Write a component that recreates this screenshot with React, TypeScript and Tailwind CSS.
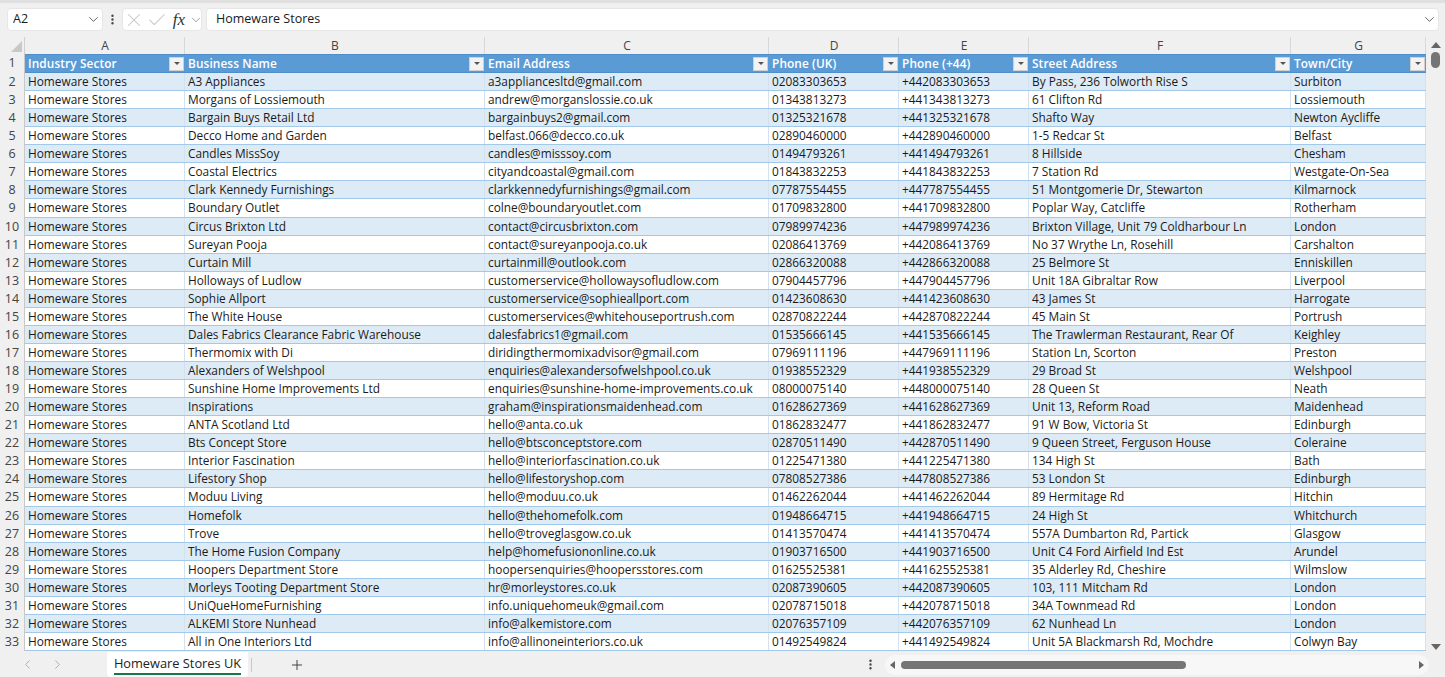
import { ChevronDown, ChevronLeft, ChevronRight, Check, X, Plus, EllipsisVertical } from 'lucide-react'

const cols = [
  { id: 'A', w: 'w-[160px]', name: 'Industry Sector' },
  { id: 'B', w: 'w-[300px]', name: 'Business Name' },
  { id: 'C', w: 'w-[284px]', name: 'Email Address' },
  { id: 'D', w: 'w-[130px]', name: 'Phone (UK)' },
  { id: 'E', w: 'w-[130px]', name: 'Phone (+44)' },
  { id: 'F', w: 'w-[262px]', name: 'Street Address' },
  { id: 'G', w: 'w-[135px]', name: 'Town/City' },
]

const rows = [
  ['A3 Appliances', 'a3appliancesltd@gmail.com', '02083303653', 'By Pass, 236 Tolworth Rise S', 'Surbiton'],
  ['Morgans of Lossiemouth', 'andrew@morganslossie.co.uk', '01343813273', '61 Clifton Rd', 'Lossiemouth'],
  ['Bargain Buys Retail Ltd', 'bargainbuys2@gmail.com', '01325321678', 'Shafto Way', 'Newton Aycliffe'],
  ['Decco Home and Garden', 'belfast.066@decco.co.uk', '02890460000', '1-5 Redcar St', 'Belfast'],
  ['Candles MissSoy', 'candles@misssoy.com', '01494793261', '8 Hillside', 'Chesham'],
  ['Coastal Electrics', 'cityandcoastal@gmail.com', '01843832253', '7 Station Rd', 'Westgate-On-Sea'],
  ['Clark Kennedy Furnishings', 'clarkkennedyfurnishings@gmail.com', '07787554455', '51 Montgomerie Dr, Stewarton', 'Kilmarnock'],
  ['Boundary Outlet', 'colne@boundaryoutlet.com', '01709832800', 'Poplar Way, Catcliffe', 'Rotherham'],
  ['Circus Brixton Ltd', 'contact@circusbrixton.com', '07989974236', 'Brixton Village, Unit 79 Coldharbour Ln', 'London'],
  ['Sureyan Pooja', 'contact@sureyanpooja.co.uk', '02086413769', 'No 37 Wrythe Ln, Rosehill', 'Carshalton'],
  ['Curtain Mill', 'curtainmill@outlook.com', '02866320088', '25 Belmore St', 'Enniskillen'],
  ['Holloways of Ludlow', 'customerservice@hollowaysofludlow.com', '07904457796', 'Unit 18A Gibraltar Row', 'Liverpool'],
  ['Sophie Allport', 'customerservice@sophieallport.com', '01423608630', '43 James St', 'Harrogate'],
  ['The White House', 'customerservices@whitehouseportrush.com', '02870822244', '45 Main St', 'Portrush'],
  ['Dales Fabrics Clearance Fabric Warehouse', 'dalesfabrics1@gmail.com', '01535666145', 'The Trawlerman Restaurant, Rear Of', 'Keighley'],
  ['Thermomix with Di', 'diridingthermomixadvisor@gmail.com', '07969111196', 'Station Ln, Scorton', 'Preston'],
  ['Alexanders of Welshpool', 'enquiries@alexandersofwelshpool.co.uk', '01938552329', '29 Broad St', 'Welshpool'],
  ['Sunshine Home Improvements Ltd', 'enquiries@sunshine-home-improvements.co.uk', '08000075140', '28 Queen St', 'Neath'],
  ['Inspirations', 'graham@inspirationsmaidenhead.com', '01628627369', 'Unit 13, Reform Road', 'Maidenhead'],
  ['ANTA Scotland Ltd', 'hello@anta.co.uk', '01862832477', '91 W Bow, Victoria St', 'Edinburgh'],
  ['Bts Concept Store', 'hello@btsconceptstore.com', '02870511490', '9 Queen Street, Ferguson House', 'Coleraine'],
  ['Interior Fascination', 'hello@interiorfascination.co.uk', '01225471380', '134 High St', 'Bath'],
  ['Lifestory Shop', 'hello@lifestoryshop.com', '07808527386', '53 London St', 'Edinburgh'],
  ['Moduu Living', 'hello@moduu.co.uk', '01462262044', '89 Hermitage Rd', 'Hitchin'],
  ['Homefolk', 'hello@thehomefolk.com', '01948664715', '24 High St', 'Whitchurch'],
  ['Trove', 'hello@troveglasgow.co.uk', '01413570474', '557A Dumbarton Rd, Partick', 'Glasgow'],
  ['The Home Fusion Company', 'help@homefusiononline.co.uk', '01903716500', 'Unit C4 Ford Airfield Ind Est', 'Arundel'],
  ['Hoopers Department Store', 'hoopersenquiries@hoopersstores.com', '01625525381', '35 Alderley Rd, Cheshire', 'Wilmslow'],
  ['Morleys Tooting Department Store', 'hr@morleystores.co.uk', '02087390605', '103, 111 Mitcham Rd', 'London'],
  ['UniQueHomeFurnishing', 'info.uniquehomeuk@gmail.com', '02078715018', '34A Townmead Rd', 'London'],
  ['ALKEMI Store Nunhead', 'info@alkemistore.com', '02076357109', '62 Nunhead Ln', 'London'],
  ['All in One Interiors Ltd', 'info@allinoneinteriors.co.uk', '01492549824', 'Unit 5A Blackmarsh Rd, Mochdre', 'Colwyn Bay'],
]

function Cell({ w, children }: { w: string; children: React.ReactNode }) {
  return <div className={`${w} shrink-0 overflow-hidden whitespace-nowrap pl-[3px] border-r border-[#d4e2f0]`}>{children}</div>
}

export default function App() {
  return (
    <div className="h-[677px] w-[1445px] overflow-hidden bg-[#f0f0f0] flex flex-col text-[11.85px] text-[#1a1a1a] font-['Open_Sans','Noto_Sans',sans-serif]">
      {/* Formula bar */}
      <div className="h-[37px] shrink-0 flex items-start gap-[3px] pl-[7px] pr-[6px] pt-[8px] border-t-[3px] border-[#e0e0e0]">
        <div className="-mt-[3px] flex gap-[4px] w-full items-center">
          <div className="h-[23px] w-[96px] bg-white rounded border border-[#e6e6e6] flex items-center justify-between pl-[5px] pr-[1px] text-[12.5px]">
            <span>A2</span>
            <ChevronDown size={15} strokeWidth={1.5} className="text-[#555]" />
          </div>
          <EllipsisVertical size={13} strokeWidth={2.5} className="text-[#444] -mx-[1px]" />
          <div className="h-[23px] w-[80px] bg-white rounded border border-[#e6e6e6] flex items-center text-[#c4c4c4]">
            <X size={22} strokeWidth={1.1} className="shrink-0" />
            <Check size={22} strokeWidth={1.1} className="shrink-0 ml-[0.5px]" />
            <span className="w-[15px] ml-[4px] shrink-0 text-center text-[#333] italic text-[17px] leading-[20px] font-['Liberation_Serif',serif]">fx</span>
            <ChevronDown size={14} strokeWidth={1.25} className="text-[#777] shrink-0 ml-[2px]" />
          </div>
          <div className="h-[23px] flex-1 bg-white rounded border border-[#e6e6e6] flex items-center justify-between pl-[9px] pr-[1px] text-[12.5px]">
            <span>Homeware Stores</span>
            <ChevronDown size={15} strokeWidth={1.5} className="text-[#555]" />
          </div>
        </div>
      </div>

      <div className="flex-1 flex min-h-0">
        {/* Sheet */}
        <div className="w-[1426px] shrink-0 flex flex-col">
          {/* Column letters */}
          <div className="h-[17px] shrink-0 flex text-[#444] text-[12px] leading-[17px] text-center">
            <div className="w-[25px] shrink-0 relative border-r border-[#d0d0d0]">
              <div className="absolute right-[2px] bottom-[2px] w-0 h-0 border-l-[11px] border-l-transparent border-b-[11px] border-b-[#c8c8c8]" />
            </div>
            {cols.map((c) => (
              <div key={c.id} className={`${c.w} shrink-0 pl-[1px] border-r border-[#d8d8d8]`}>{c.id}</div>
            ))}
          </div>
          {/* Header row */}
          <div className="h-[19px] shrink-0 flex leading-[17px]">
            <div className="w-[25px] shrink-0 text-center text-[#444] text-[12.5px] border-r border-[#c8c8c8]">1</div>
            {cols.map((c) => (
              <div key={c.id} className={`${c.w} shrink-0 bg-[#5b9bd5] border-t border-b border-[#4f8ec9] text-white font-semibold tracking-[0.1px] flex items-center justify-between pl-[3px] pr-[1px]`}>
                <span className="-mt-[1px]">{c.name}</span>
                <span className="w-[15px] h-[14px] bg-[#f3f3f3] border border-[#d0d0d0] flex items-center justify-center">
                  <span className="w-0 h-0 border-l-[3px] border-r-[3px] border-t-[3px] border-l-transparent border-r-transparent border-t-[#555]" />
                </span>
              </div>
            ))}
          </div>
          {/* Data rows */}
          {rows.map((r, i) => (
            <div key={i} className="h-[18.07px] shrink-0 flex leading-[17.4px]">
              <div className="w-[25px] shrink-0 text-center text-[#444] text-[12.5px] border-r border-[#c8c8c8]">{i + 2}</div>
              <div className={`flex border-b border-[#a3c9ea] ${i % 2 === 0 ? 'bg-[#ddebf7]' : 'bg-white'}`}>
                <Cell w={cols[0].w}>Homeware Stores</Cell>
                <Cell w={cols[1].w}>{r[0]}</Cell>
                <Cell w={cols[2].w}>{r[1]}</Cell>
                <Cell w={cols[3].w}>{r[2]}</Cell>
                <Cell w={cols[4].w}>{'+44' + r[2].slice(1)}</Cell>
                <Cell w={cols[5].w}>{r[3]}</Cell>
                <Cell w={cols[6].w}>{r[4]}</Cell>
              </div>
            </div>
          ))}
        </div>
        {/* Vertical scrollbar */}
        <div className="flex-1 flex flex-col items-center pt-[5px] pb-[2px]">
          <div className="w-0 h-0 border-l-[5px] border-r-[5px] border-b-[6px] border-l-transparent border-r-transparent border-b-[#666]" />
          <div className="w-[9px] h-[16px] mt-[4px] rounded-full bg-[#757575]" />
          <div className="flex-1" />
          <div className="w-0 h-0 border-l-[5px] border-r-[5px] border-t-[6px] border-l-transparent border-r-transparent border-t-[#666]" />
        </div>
      </div>

      {/* Tab bar */}
      <div className="h-[25px] shrink-0 flex items-center">
        <ChevronLeft size={15} strokeWidth={1.5} className="ml-[20px] text-[#aaa]" />
        <ChevronRight size={15} strokeWidth={1.5} className="ml-[15px] text-[#aaa]" />
        <div className="ml-[42px] h-[25px] w-[141px] bg-white rounded-b flex justify-center relative text-[12.8px] text-[#222] leading-[23px]">
          Homeware Stores UK
          <div className="absolute left-[7px] right-[7px] bottom-[2px] h-[2px] bg-[#107c41]" />
        </div>
        <div className="ml-[3px] w-px h-[14px] bg-[#c8c8c8]" />
        <Plus size={16} strokeWidth={1.5} className="ml-[37px] text-[#444]" />
        <div className="flex-1" />
        <EllipsisVertical size={13} strokeWidth={2.5} className="text-[#444]" />
        <div className="ml-[8px] mr-[16px] w-[544px] h-[20px] rounded-full bg-[#f7f7f7] flex items-center px-[5px]">
          <div className="w-0 h-0 border-t-[4px] border-b-[4px] border-r-[5px] border-t-transparent border-b-transparent border-r-[#666]" />
          <div className="ml-[6px] w-[285px] h-[8px] rounded-full bg-[#757575]" />
          <div className="flex-1" />
          <div className="w-0 h-0 border-t-[4px] border-b-[4px] border-l-[5px] border-t-transparent border-b-transparent border-l-[#666]" />
        </div>
      </div>
    </div>
  )
}
